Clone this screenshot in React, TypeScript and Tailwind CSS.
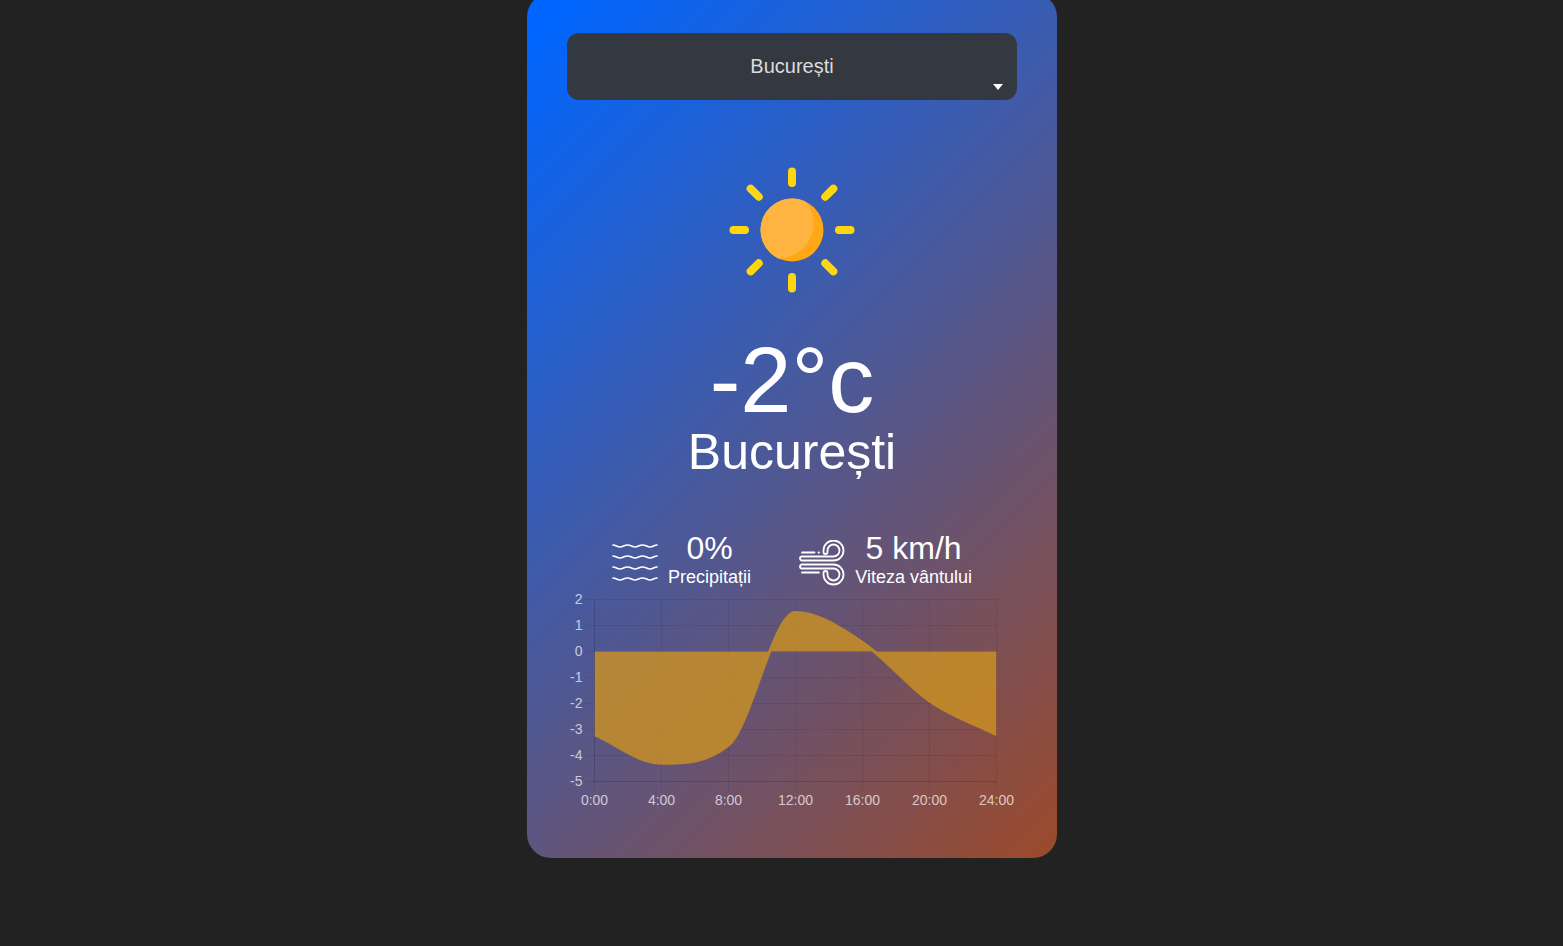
import { useId, useState } from "react";

const CITIES = ["București", "Cluj-Napoca", "Iași", "Timișoara"];
const HOURS = ["0:00", "4:00", "8:00", "12:00", "16:00", "20:00", "24:00"];
const TEMPERATURES = [-3.2, -4.3, -3.6, 1.5, 0.35, -1.9, -3.2];
const LEVELS = [2, 1, 0, -1, -2, -3, -4, -5];

const LEFT = 27.5;
const TOP = 8.5;
const STEP_X = 67;
const STEP_Y = 26;
const BOTTOM = TOP + 7 * STEP_Y;
const RIGHT = LEFT + 6 * STEP_X;
const ZERO = TOP + 2 * STEP_Y;

// Monotone cubic interpolation over evenly spaced values.
function monotoneCurve(ys: number[]): string {
  const last = ys.length - 1;
  const delta = ys.slice(1).map((y, i) => y - ys[i]);
  const slope = ys.map((_, i) => {
    if (i === 0) return delta[0];
    if (i === last) return delta[last - 1];
    return delta[i - 1] * delta[i] <= 0 ? 0 : (delta[i - 1] + delta[i]) / 2;
  });
  delta.forEach((d, i) => {
    const a = slope[i] / d;
    const b = slope[i + 1] / d;
    const size = Math.hypot(a, b);
    if (size > 3) {
      slope[i] = (3 / size) * a * d;
      slope[i + 1] = (3 / size) * b * d;
    }
  });
  return ys
    .map((y, i) => {
      const x = LEFT + i * STEP_X;
      if (i === 0) return `M${x} ${y}`;
      const third = STEP_X / 3;
      return `C${x - STEP_X + third} ${ys[i - 1] + slope[i - 1] / 3} ${x - third} ${y - slope[i] / 3} ${x} ${y}`;
    })
    .join(" ");
}

function TemperatureChart() {
  const clipId = useId();
  const curve = monotoneCurve(TEMPERATURES.map((t) => ZERO - t * STEP_Y));
  return (
    <svg viewBox="0 0 450 225" className="block w-full" role="img" aria-label="Temperatura pe ore">
      <defs>
        <clipPath id={clipId}>
          <rect x={LEFT} y={TOP} width={RIGHT - LEFT} height={BOTTOM - TOP} />
        </clipPath>
      </defs>
      <g stroke="#000" strokeOpacity="0.08">
        {LEVELS.map((v, i) => (
          <line key={v} x1={LEFT - 9} x2={RIGHT} y1={TOP + i * STEP_Y} y2={TOP + i * STEP_Y} />
        ))}
        {HOURS.map((h, i) => (
          <line key={h} x1={LEFT + i * STEP_X} x2={LEFT + i * STEP_X} y1={TOP} y2={BOTTOM + 8} />
        ))}
        <path d={`M${LEFT} ${TOP}V${BOTTOM}H${RIGHT}`} fill="none" />
      </g>
      <g opacity="0.8" clipPath={`url(#${clipId})`}>
        <path d={`${curve}V${ZERO}H${LEFT}Z`} fill="#cd9322" />
        <path d={curve} fill="none" stroke="#cd9322" strokeWidth="3" />
      </g>
      <g className="fill-white/70 font-['Liberation_Sans',Arial,sans-serif] text-[14px]">
        {LEVELS.map((v, i) => (
          <text key={v} x={LEFT - 12} y={TOP + i * STEP_Y + 4} textAnchor="end">
            {v}
          </text>
        ))}
        {HOURS.map((h, i) => (
          <text key={h} x={LEFT + i * STEP_X} y={BOTTOM + 23} textAnchor="middle">
            {h}
          </text>
        ))}
      </g>
    </svg>
  );
}

function SunIcon() {
  return (
    <svg viewBox="0 0 126 126" className="size-[126px]" aria-hidden="true">
      <g stroke="#fdd60f" strokeWidth="8" strokeLinecap="round">
        {[0, 45, 90, 135, 180, 225, 270, 315].map((a) => (
          <line key={a} x1="63" y1="4.5" x2="63" y2="16" transform={`rotate(${a} 63 63)`} />
        ))}
      </g>
      <circle cx="63" cy="63" r="31.5" fill="#ffa714" />
      <path d="M76 34.3C82 40 84.500 48 84.500 57C84.500 76 70 90 50 91.700A31.500 31.500 0 0 1 76 34.300Z" fill="#ffb341" />
    </svg>
  );
}

function WavesIcon() {
  return (
    <svg viewBox="0 0 46 46" className="mt-2 size-[46px]" fill="none" stroke="#fff" strokeWidth="1.7" strokeLinecap="round" aria-hidden="true">
      {[5, 16, 27, 38].map((y) => (
        <path key={y} d={`M1 ${y}C4 ${y} 5 ${y + 2} 8 ${y + 2}S12 ${y} 15.500 ${y}S20 ${y + 2} 23 ${y + 2}S27 ${y} 30.500 ${y}S35 ${y + 2} 38 ${y + 2}S42 ${y} 45 ${y}`} />
      ))}
    </svg>
  );
}

function WindIcon() {
  return (
    <svg viewBox="0 0 46 46" className="mt-2 size-[46px]" fill="none" stroke="#fff" strokeWidth="1.8" strokeLinecap="round" aria-hidden="true">
      <path d="M3 12.500H15.500M19.500 12.500H20" />
      <path d="M34.500 20.500H3A2 2 0 0 1 3 16.500H34.500A6 6 0 1 0 28.500 10.500V12A2 2 0 0 1 24.500 12V10.500A10 10 0 1 1 34.500 20.500Z" />
      <path d="M34.500 24.500H3A2 2 0 0 0 3 28.500H34.500A6 6 0 1 1 28.500 34.500V33A2 2 0 0 0 24.500 33V34.500A10 10 0 1 0 34.500 24.500Z" />
      <path d="M3 32.500H20" />
    </svg>
  );
}

export default function App() {
  const [city, setCity] = useState(CITIES[0]);
  return (
    <div className="flex min-h-screen items-start justify-center overflow-hidden bg-[#222] pl-[21px] font-['Liberation_Sans',Arial,sans-serif] text-white">
      <main className="-mt-[7px] w-full max-w-[530px] rounded-3xl bg-linear-135/srgb from-[#0066ff] from-3% to-[#9c4a2a] px-10 pt-10 pb-[42px]">
        <div className="relative">
          <select
            aria-label="Oraș"
            value={city}
            onChange={(e) => setCity(e.target.value)}
            className="block h-[67px] w-full appearance-none rounded-xl bg-[#343841] pb-0.5 text-center text-xl text-[#dcdcdc] [text-align-last:center]"
          >
            {CITIES.map((c) => (
              <option key={c}>{c}</option>
            ))}
          </select>
          <svg viewBox="0 0 10 6" className="pointer-events-none absolute right-[14px] bottom-[10px] h-[6px] w-[10px]" aria-hidden="true">
            <path d="M0 0H10L5 6Z" fill="#fff" />
          </svg>
        </div>
        <div className="mt-[67px] flex justify-center">
          <SunIcon />
        </div>
        <h1 className="mt-10 text-center text-[92px] leading-[94px] font-normal">-2°c</h1>
        <h2 className="text-center text-[50px] leading-[50px] font-normal">{city}</h2>
        <div className="mt-[53px] flex justify-between px-[45px]">
          <div className="flex items-center gap-[10px]">
            <WavesIcon />
            <div className="text-center">
              <p className="text-[32px] leading-9">0%</p>
              <p className="text-lg leading-[22px]">Precipitații</p>
            </div>
          </div>
          <div className="flex items-center gap-[10px]">
            <WindIcon />
            <div className="text-center">
              <p className="text-[32px] leading-9">5 km/h</p>
              <p className="text-lg leading-[22px]">Viteza vântului</p>
            </div>
          </div>
        </div>
        <div className="mt-[3px]">
          <TemperatureChart />
        </div>
      </main>
    </div>
  );
}
